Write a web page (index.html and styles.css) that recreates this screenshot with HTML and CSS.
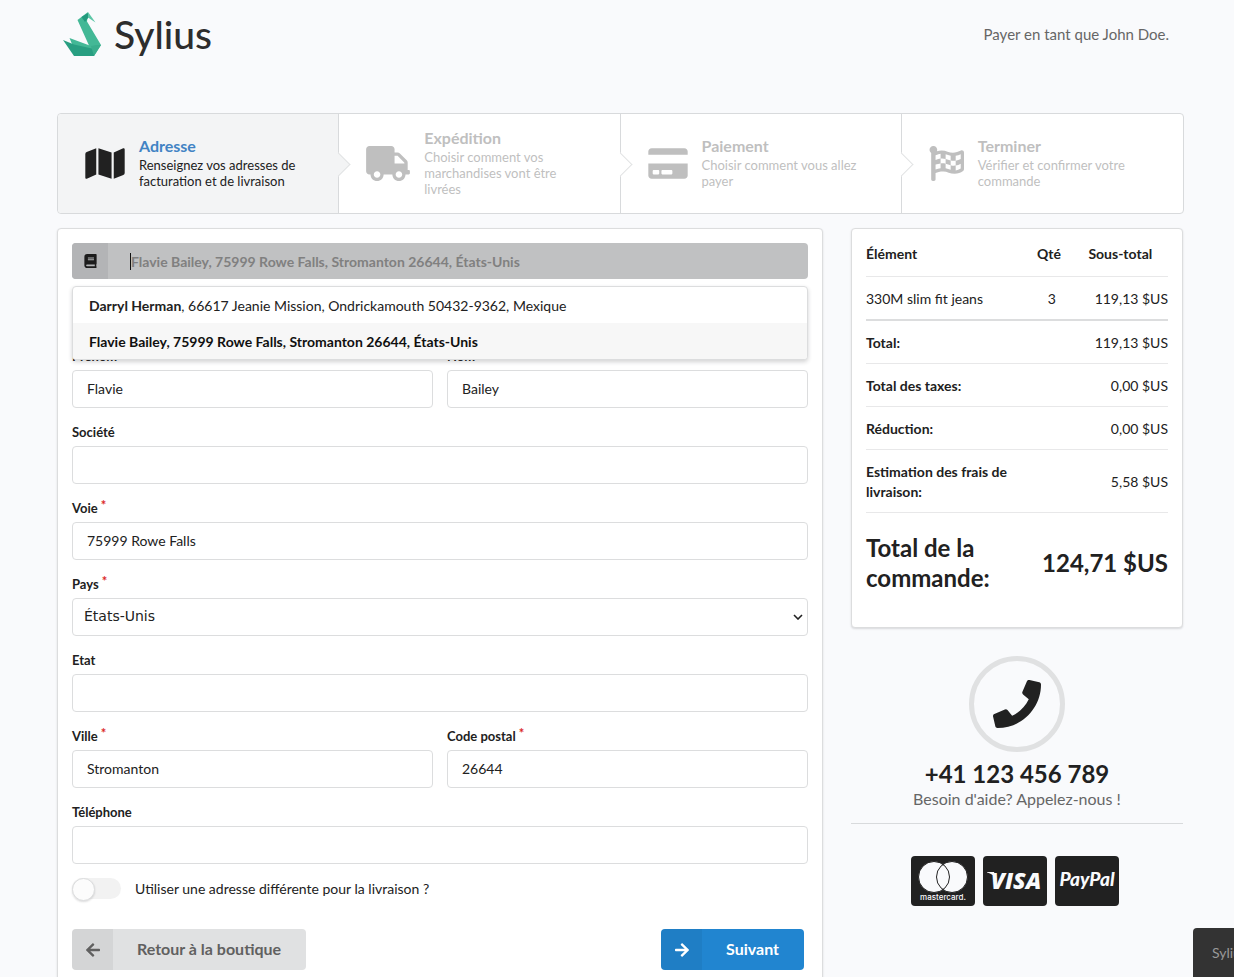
FILE: index.html
```html
<!DOCTYPE html>
<html lang="fr">
<head>
<meta charset="utf-8">
<meta name="viewport" content="width=device-width, initial-scale=1">
<title>Sylius – Adresse</title>
<link rel="stylesheet" href="styles.css">
</head>
<body>
<div class="page">
  <header class="top">
    <a class="brand" href="#">
      <svg class="brand-mark" viewBox="0 0 38 44" aria-hidden="true">
        <path fill="#43b896" d="M14.500 8L25 0l-1 9.500L38 33l-7 11-5-10.500z"/>
        <path fill="#239a7d" d="M18.500 5L25 1l.5 4.500L22 10z"/>
        <path fill="#5cc6a6" d="M25 0l7.500 10.500-7.500-5z"/>
        <path fill="#43b896" d="M6.500 26L28 34l3 10-20-7z"/>
        <path fill="#289e81" d="M0 28l11 4.500L31 37v7H11z"/>
        <path fill="#3aae8d" d="M31 44l-3-10 5-1 5 0z"/>
      </svg>
      <span class="brand-name">Sylius</span>
    </a>
    <p class="payer">Payer en tant que John Doe.</p>
  </header>

  <nav class="steps" aria-label="Étapes de la commande">
    <a class="step step-active" href="#">
      <svg class="step-icon icon-wide" viewBox="0 0 576 512" aria-hidden="true"><path d="M0 117.660v346.320c0 11.320 11.430 19.060 21.940 14.860L160 416V32L20.120 87.950A32 32 0 0 0 0 117.660zM192 416l192 64V96L192 32v384zM554.060 33.160L416 96v384l139.880-55.950A32 32 0 0 0 576 394.340V48.020c0-11.320-11.430-19.060-21.940-14.860z"/></svg>
      <span class="step-text"><span class="step-title">Adresse</span><span class="step-desc">Renseignez vos adresses de facturation et de livraison</span></span>
    </a>
    <div class="step">
      <svg class="step-icon icon-truck" viewBox="0 0 640 512" aria-hidden="true"><path d="M624 352h-16V243.900c0-12.700-5.100-24.900-14.100-33.900L494 110.100c-9-9-21.200-14.100-33.900-14.100H416V48c0-26.500-21.500-48-48-48H48C21.500 0 0 21.500 0 48v320c0 26.500 21.500 48 48 48h16c0 53 43 96 96 96s96-43 96-96h128c0 53 43 96 96 96s96-43 96-96h48c8.800 0 16-7.200 16-16v-32c0-8.800-7.200-16-16-16zM160 464c-26.500 0-48-21.500-48-48s21.500-48 48-48 48 21.500 48 48-21.500 48-48 48zm320 0c-26.500 0-48-21.500-48-48s21.500-48 48-48 48 21.500 48 48-21.500 48-48 48zm80-208H416V144h44.100l99.900 99.900V256z"/></svg>
      <span class="step-text"><span class="step-title">Expédition</span><span class="step-desc">Choisir comment vos marchandises vont être livrées</span></span>
    </div>
    <div class="step">
      <svg class="step-icon icon-wide" viewBox="0 0 576 512" aria-hidden="true"><path d="M0 432c0 26.500 21.500 48 48 48h480c26.500 0 48-21.500 48-48V256H0v176zm192-68c0-6.600 5.400-12 12-12h136c6.600 0 12 5.400 12 12v40c0 6.600-5.400 12-12 12H204c-6.600 0-12-5.400-12-12v-40zm-128 0c0-6.600 5.400-12 12-12h72c6.600 0 12 5.400 12 12v40c0 6.600-5.400 12-12 12H76c-6.600 0-12-5.400-12-12v-40zM576 80v48H0V80c0-26.500 21.500-48 48-48h480c26.500 0 48 21.500 48 48z"/></svg>
      <span class="step-text"><span class="step-title">Paiement</span><span class="step-desc">Choisir comment vous allez payer</span></span>
    </div>
    <div class="step">
      <svg class="step-icon" viewBox="0 0 512 512" aria-hidden="true"><path d="M243.200 189.900V258c26.100 5.900 49.300 15.600 73.600 22.300v-68.200c-26-5.800-49.400-15.500-73.600-22.200zm223.300-123c-34.300 15.900-76.500 31.900-117 31.900C296 98.800 251.700 64 184.300 64c-25 0-47.300 4.400-68 12 2.800-7.300 4.100-15.200 3.600-23.600C118.100 24 94.800 1.200 66.300 0 34.300-1.300 8 24.300 8 56c0 19 9.500 35.800 24 45.900V488c0 13.300 10.700 24 24 24h16c13.300 0 24-10.700 24-24v-94.400c28.300-12.100 63.600-22.100 114.400-22.100 53.600 0 97.800 34.800 165.200 34.800 48.200 0 86.700-16.300 122.500-40.900 8.700-6 13.800-15.800 13.800-26.400V95.900c.1-23.300-24.200-38.800-45.400-29zM169.600 325.500c-25.800 2.700-50 8.200-73.600 16.600v-70.500c26.200-9.300 47.500-15 73.600-17.400v71.300zM464 191c-23.600 9.800-46.300 19.500-73.600 23.900V286c24.800-3.400 51.400-11.800 73.600-26v70.500c-25.100 16.100-48.500 24.700-73.600 27.100V286c-27 3.700-47.900 1.500-73.600-5.600v67.400c-23.900-7.400-47.300-16.700-73.600-21.300V258c-19.700-4.400-40.800-6.800-73.600-3.800v-70c-22.400 3.100-44.600 10.200-73.600 20.900v-70.500c33.200-12.200 50.100-19.800 73.600-22v71.600c27-3.700 48.400-1.300 73.600 5.700v-67.400c23.700 7.400 47.200 16.700 73.600 21.300v68.400c23.700 5.300 47.600 6.900 73.600 2.700V143c27-4.800 52.300-13.600 73.600-22.500z"/></svg>
      <span class="step-text"><span class="step-title">Terminer</span><span class="step-desc">Vérifier et confirmer votre commande</span></span>
    </div>
  </nav>

  <div class="columns">
    <main class="panel">
      <form class="form">
        <div class="book">
          <div class="book-bar">
            <span class="book-icon"><svg viewBox="0 0 448 512" aria-hidden="true"><path d="M448 360V24c0-13.300-10.700-24-24-24H96C43 0 0 43 0 96v320c0 53 43 96 96 96h328c13.300 0 24-10.700 24-24v-16c0-7.500-3.500-14.300-8.900-18.700-4.200-15.400-4.200-59.300 0-74.700 5.400-4.300 8.900-11.100 8.900-18.600zM128 134c0-3.300 2.700-6 6-6h212c3.300 0 6 2.700 6 6v20c0 3.300-2.700 6-6 6H134c-3.300 0-6-2.700-6-6v-20zm0 64c0-3.300 2.700-6 6-6h212c3.300 0 6 2.700 6 6v20c0 3.300-2.700 6-6 6H134c-3.300 0-6-2.700-6-6v-20zm253.400 250H96c-17.700 0-32-14.300-32-32 0-17.600 14.400-32 32-32h285.400c-1.900 17.100-1.900 46.900 0 64z"/></svg></span>
            <span class="caret"></span>
            <input class="book-search" type="text" aria-label="Carnet d'adresses" placeholder="Flavie Bailey, 75999 Rowe Falls, Stromanton 26644, États-Unis">
          </div>
          <ul class="book-menu">
            <li class="book-item"><strong>Darryl Herman</strong>, 66617 Jeanie Mission, Ondrickamouth 50432-9362, Mexique</li>
            <li class="book-item book-item-on">Flavie Bailey, 75999 Rowe Falls, Stromanton 26644, États-Unis</li>
          </ul>
        </div>
        <div class="row">
          <div class="field"><label class="label required" for="first">Prénom</label><input class="input" id="first" type="text" value="Flavie"></div>
          <div class="field"><label class="label required" for="last">Nom</label><input class="input" id="last" type="text" value="Bailey"></div>
        </div>
        <div class="field"><label class="label" for="company">Société</label><input class="input" id="company" type="text"></div>
        <div class="field"><label class="label required" for="street">Voie</label><input class="input" id="street" type="text" value="75999 Rowe Falls"></div>
        <div class="field"><label class="label required" for="country">Pays</label>
          <div class="select-wrap">
            <select class="input select" id="country"><option>États-Unis</option><option>Mexique</option></select>
            <svg class="select-arrow" viewBox="0 0 10 6" aria-hidden="true"><path d="M1 1l4 4 4-4"/></svg>
          </div>
        </div>
        <div class="field"><label class="label" for="state">Etat</label><input class="input" id="state" type="text"></div>
        <div class="row">
          <div class="field"><label class="label required" for="city">Ville</label><input class="input" id="city" type="text" value="Stromanton"></div>
          <div class="field"><label class="label required" for="zip">Code postal</label><input class="input" id="zip" type="text" value="26644"></div>
        </div>
        <div class="field"><label class="label" for="phone">Téléphone</label><input class="input" id="phone" type="tel"></div>
        <div class="switch-row">
          <input class="switch" id="different" type="checkbox">
          <label for="different">Utiliser une adresse différente pour la livraison ?</label>
        </div>
        <div class="actions">
          <a class="button button-back" href="#">
            <span class="button-icon"><svg viewBox="0 0 448 512" aria-hidden="true"><path d="M257.500 445.100l-22.200 22.200c-9.400 9.400-24.600 9.400-33.900 0L7 273c-9.400-9.400-9.400-24.600 0-33.900L201.400 44.700c9.400-9.400 24.600-9.400 33.900 0l22.200 22.200c9.500 9.500 9.300 25-.4 34.300L136.600 216H424c13.300 0 24 10.700 24 24v32c0 13.300-10.700 24-24 24H136.600l120.500 114.800c9.800 9.300 10 24.800.4 34.300z"/></svg></span>
            <span class="button-text">Retour à la boutique</span>
          </a>
          <button class="button button-next" type="submit">
            <span class="button-icon"><svg viewBox="0 0 448 512" aria-hidden="true"><path d="M190.500 66.900l22.200-22.200c9.400-9.400 24.600-9.400 33.900 0L441 239c9.400 9.400 9.400 24.600 0 33.900L246.600 467.300c-9.400 9.400-24.600 9.400-33.900 0l-22.200-22.200c-9.500-9.500-9.300-25 .4-34.300L311.400 296H24c-13.300 0-24-10.700-24-24v-32c0-13.300 10.700-24 24-24h287.400L190.900 101.200c-9.800-9.300-10-24.800-.4-34.300z"/></svg></span>
            <span class="button-text">Suivant</span>
          </button>
        </div>
      </form>
    </main>

    <aside class="side">
      <section class="panel">
        <table class="summary">
          <thead>
            <tr><th class="col-item">Élément</th><th class="col-qty">Qté</th><th class="col-sum">Sous-total</th></tr>
          </thead>
          <tbody>
            <tr><td>330M slim fit jeans</td><td class="center">3</td><td class="right">119,13 $US</td></tr>
          </tbody>
          <tfoot>
            <tr><th>Total:</th><td class="right" colspan="2">119,13 $US</td></tr>
            <tr><th>Total des taxes:</th><td class="right" colspan="2">0,00 $US</td></tr>
            <tr><th>Réduction:</th><td class="right" colspan="2">0,00 $US</td></tr>
            <tr><th>Estimation des frais de livraison:</th><td class="right" colspan="2">5,58 $US</td></tr>
            <tr class="grand"><th>Total de la commande:</th><td class="right" colspan="2">124,71 $US</td></tr>
          </tfoot>
        </table>
      </section>
      <section class="help">
        <span class="help-ring"><svg viewBox="0 0 512 512" aria-hidden="true"><path d="M493.397 24.615l-104-23.997c-11.314-2.611-22.879 3.252-27.456 13.931l-48 111.997a24 24 0 0 0 6.862 28.029l60.617 49.596c-35.973 76.675-98.938 140.508-177.249 177.248l-49.596-60.616a24 24 0 0 0-28.029-6.863l-111.997 48C3.873 366.516-1.994 378.080.618 389.396l23.997 104C27.109 504.204 36.748 512 48 512c256.087 0 464-207.532 464-464 0-11.176-7.714-20.873-18.603-23.385z"/></svg></span>
        <strong class="help-number">+41 123 456 789</strong>
        <span class="help-text">Besoin d'aide? Appelez-nous !</span>
      </section>
      <div class="cards">
        <svg class="card" viewBox="0 0 64 50" role="img" aria-label="mastercard">
          <rect class="card-bg" width="64" height="50" rx="4"/>
          <circle class="card-fill" cx="23" cy="21" r="15.500"/><circle class="card-fill" cx="41" cy="21" r="15.500"/>
          <circle class="card-line" cx="23" cy="21" r="15.500"/><circle class="card-line" cx="41" cy="21" r="15.500"/>
          <text class="card-small" x="32" y="44">mastercard.</text>
        </svg>
        <svg class="card" viewBox="0 0 64 50" role="img" aria-label="VISA">
          <rect class="card-bg" width="64" height="50" rx="4"/>
          <path class="card-fill" d="M4 16h7l3 8c-2-4-5-6-10-7.500z"/>
          <text class="card-visa" x="33" y="33">VISA</text>
        </svg>
        <svg class="card" viewBox="0 0 64 50" role="img" aria-label="PayPal">
          <rect class="card-bg" width="64" height="50" rx="4"/>
          <text class="card-paypal" x="32" y="30">PayPal</text>
        </svg>
      </div>
    </aside>
  </div>
</div>
<div class="toolbar">Sylius</div>
</body>
</html>
```
FILE: styles.css
```css
* { box-sizing: border-box; }

body {
  margin: 0;
  background: #f9fafc;
  color: #212121;
  font: 14px/20px Lato, "Liberation Sans", sans-serif;
  overflow-x: hidden;
}

a { color: inherit; text-decoration: none; }

.page { padding: 0 50px 0 57px; }

/* Header */
.top {
  display: flex;
  justify-content: space-between;
  align-items: flex-start;
  height: 113px;
  padding: 12px 15px 0 6px;
}
.brand { display: flex; align-items: center; gap: 13px; }
.brand-mark { width: 38px; height: 44px; }
.brand-name { font-size: 39px; line-height: 44px; font-weight: 500; color: #2d2d2d; }
.payer { margin: 12px 0 0; font-size: 15px; color: #666; }

/* Steps */
.steps {
  display: grid;
  grid-template-columns: repeat(4, 1fr);
  min-height: 101px;
  margin-bottom: 14px;
  border: 1px solid #d8dadc;
  border-radius: 4px;
  background: #fff;
}
.step {
  position: relative;
  display: flex;
  align-items: center;
  gap: 14px;
  padding: 12px 27px;
  border-right: 1px solid #d8dadc;
  color: #bfbfbf;
}
.step:last-child { border-right: 0; }
.step::after {
  content: "";
  position: absolute;
  top: 50%;
  right: -9px;
  width: 16px;
  height: 16px;
  margin-top: -8px;
  border: solid #e2e3e4;
  border-width: 0 1px 1px 0;
  background: #fff;
  transform: rotate(-45deg);
  z-index: 1;
}
.step:last-child::after { display: none; }
.step-active { background: #f3f4f5; color: #212121; border-radius: 4px 0 0 4px; }
.step-active::after { background: #f3f4f5; }
.step-icon { flex: none; width: 35px; height: 35px; fill: currentColor; }
.icon-wide { width: 40px; }
.icon-truck { width: 44px; }
.step-text { padding-bottom: 2px; }
.step-title { display: block; margin-bottom: 2px; font-size: 16px; line-height: 18px; font-weight: 700; }
.step-active .step-title { color: #4183c4; }
.step-desc { display: block; font-size: 13px; line-height: 16px; }

/* Layout */
.columns {
  display: grid;
  grid-template-columns: minmax(0, 766fr) minmax(0, 332fr);
  gap: 28px;
  align-items: start;
  padding-right: 1px;
}
.panel {
  padding: 14px;
  border: 1px solid #dcddde;
  border-radius: 4px;
  background: #fff;
  box-shadow: 0 1px 2px rgba(34, 36, 38, 0.15);
}

/* Address book */
.book { position: relative; margin-bottom: 67px; }
.book-bar {
  display: flex;
  align-items: center;
  height: 36px;
  border-radius: 4px;
  background: #c0c1c2;
  overflow: hidden;
}
.book-icon {
  display: flex;
  align-items: center;
  justify-content: center;
  width: 36px;
  height: 36px;
  background: #b3b4b6;
}
.book-icon svg { width: 13px; height: 14px; fill: #1c1c1c; }
.caret { width: 1px; height: 17px; margin-left: 22px; background: #111; }
.book-search {
  flex: 1;
  min-width: 0;
  padding: 2px 0 0;
  border: 0;
  outline: 0;
  background: none;
  font: 700 14px/20px Lato, sans-serif;
}
.book-search::placeholder { color: #808080; opacity: 1; }
.book-menu {
  position: absolute;
  top: 43px;
  left: 0;
  right: 0;
  z-index: 2;
  margin: 0;
  padding: 0;
  list-style: none;
  border: 1px solid #dcddde;
  border-radius: 4px;
  background: #fff;
  box-shadow: 0 2px 4px rgba(34, 36, 38, 0.2);
  overflow: hidden;
}
.book-item { padding: 9px 16px 7px; }
.book-item-on { background: #f7f7f7; color: #101010; font-weight: 700; }

/* Form */
.row { display: grid; grid-template-columns: 1fr 1fr; gap: 14px; }
.field { margin-bottom: 14px; }
.label { display: block; margin-bottom: 4px; font-size: 13px; line-height: 20px; font-weight: 700; }
.required::after { content: "*"; margin-left: 3px; color: #db2828; vertical-align: 3px; line-height: 1; }
.input {
  display: block;
  width: 100%;
  height: 38px;
  padding: 0 14px 2px;
  border: 1px solid #dcddde;
  border-radius: 4px;
  background: #fff;
  color: #212121;
  font: 14px/20px Lato, sans-serif;
}
.select-wrap { position: relative; }
.select { appearance: none; padding: 0 11px 2px; font-family: "DejaVu Sans", sans-serif; }
.select-arrow {
  position: absolute;
  right: 5px;
  top: 16px;
  width: 10px;
  height: 6px;
  fill: none;
  stroke: #212121;
  stroke-width: 1.600;
  pointer-events: none;
}
.switch-row { display: flex; align-items: flex-start; gap: 14px; height: 22px; line-height: 22px; }
.switch {
  appearance: none;
  width: 49px;
  height: 21px;
  margin: 0;
  border-radius: 11px;
  background: #f2f2f2;
}
.switch::before {
  content: "";
  display: block;
  width: 21px;
  height: 21px;
  border: 1px solid #dcddde;
  border-radius: 50%;
  background: #fcfcfc;
  box-shadow: 0 1px 2px rgba(34, 36, 38, 0.15);
}
.actions { display: flex; justify-content: space-between; margin-top: 29px; padding-right: 4px; }
.button {
  display: flex;
  align-items: stretch;
  height: 41px;
  padding: 0;
  border: 0;
  border-radius: 4px;
  overflow: hidden;
  font: 700 16px/40px Lato, sans-serif;
}
.button-icon { display: flex; align-items: center; justify-content: center; width: 41px; background: rgba(0, 0, 0, 0.05); }
.button-icon svg { width: 14px; height: 16px; fill: currentColor; }
.button-text { padding: 0 25px 0 24px; }
.button-back { background: #e0e1e2; color: #606060; }
.button-next { background: #2185d0; color: #fff; }

/* Order summary */
.summary { width: 100%; table-layout: fixed; border-collapse: separate; border-spacing: 0; }
.summary th, .summary td { padding: 12px 0 10px; border-bottom: 1px solid #e8e8e9; text-align: left; }
.summary thead th { padding: 1px 0 12px; }
.col-item { width: 53%; }
.col-qty { width: 17%; }
.col-sum { width: 30%; }
.summary thead .col-qty, .summary thead .col-sum { padding-left: 11px; }
.summary tbody td { border-bottom: 2px solid #dcddde; }
.summary .center { text-align: center; }
.summary .right { text-align: right; }
.summary .grand th, .summary .grand td { padding: 20px 0; border-bottom: 0; font-size: 24px; line-height: 30px; font-weight: 700; }

/* Help */
.help {
  display: flex;
  flex-direction: column;
  align-items: center;
  margin-top: 28px;
  padding-bottom: 14px;
  border-bottom: 1px solid #d8dadc;
}
.help-ring {
  display: flex;
  align-items: center;
  justify-content: center;
  width: 96px;
  height: 96px;
  border: 5px solid #e0e1e2;
  border-radius: 50%;
}
.help-ring svg { width: 48px; height: 48px; fill: #212121; }
.help-number { margin-top: 7px; font-size: 24px; line-height: 30px; }
.help-text { font-size: 16px; line-height: 20px; color: #666; }

/* Payment cards */
.cards { display: flex; justify-content: center; gap: 8px; margin-top: 32px; padding-right: 4px; }
.card { width: 64px; height: 50px; }
.card-bg { fill: #212121; }
.card-fill { fill: #f9fafc; }
.card-line { fill: none; stroke: #212121; stroke-width: 1; }
.card text { fill: #f9fafc; text-anchor: middle; font-family: "Open Sans", sans-serif; font-weight: 700; }
.card .card-small { font-family: Inter, sans-serif; font-size: 8px; font-weight: 500; }
.card .card-visa { font-size: 23px; font-weight: 800; font-style: italic; }
.card .card-paypal { font-family: Lato, sans-serif; font-size: 19px; font-weight: 900; font-style: italic; }

/* Corner toolbar */
.toolbar {
  position: fixed;
  right: 0;
  bottom: 0;
  width: 41px;
  height: 49px;
  padding-left: 19px;
  border-radius: 4px 0 0 0;
  background: #333;
  color: #999;
  line-height: 50px;
  white-space: nowrap;
  overflow: hidden;
}
```
